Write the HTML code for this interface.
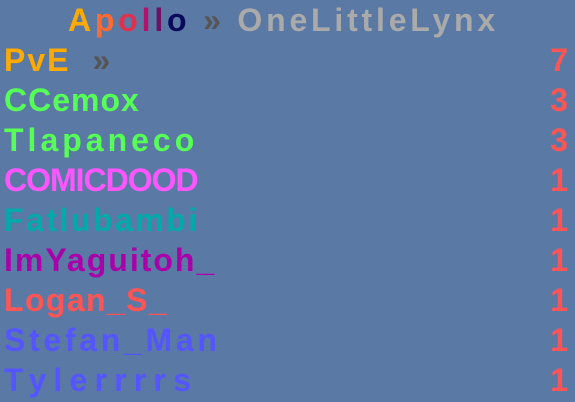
<!DOCTYPE html>
<html><head><style>
html,body{margin:0;padding:0}
body{width:575px;height:402px;background:#5a79a5;position:relative;overflow:hidden;font-family:"Liberation Sans",sans-serif;font-weight:bold;font-size:32px;}
.r{position:absolute;left:4px;height:40px;line-height:40px;letter-spacing:2px;white-space:nowrap}
.n{position:absolute;right:7px;color:#ff5555;height:40px;line-height:40px}
.t{position:absolute;left:68px;top:0;height:40px;line-height:40px;letter-spacing:3.8px;white-space:nowrap}
</style></head><body>
<div class="t"><span style="color:#ffaa00">A</span><span style="color:#ff6a33">p</span><span style="color:#e0304e">o</span><span style="color:#b3126a">l</span><span style="color:#701064">l</span><span style="color:#0a0a5c">o</span> <span style="color:#555">»</span> <span style="color:#aaa">OneLittleLynx</span></div>
<div class="r" style="top:40px;color:#ffaa00">PvE<span style="color:#555;margin-left:22px">»</span></div><div class="n" style="top:40px">7</div>
<div class="r" style="top:80px;color:#55ff55;letter-spacing:1px">CCemox</div><div class="n" style="top:80px">3</div>
<div class="r" style="top:120px;color:#55ff55;letter-spacing:4px">Tlapaneco</div><div class="n" style="top:120px">3</div>
<div class="r" style="top:160px;color:#ff55ff;letter-spacing:-1px">COMICDOOD</div><div class="n" style="top:160px">1</div>
<div class="r" style="top:200px;color:#00aaaa;letter-spacing:2.5px">Fatlubambi</div><div class="n" style="top:200px">1</div>
<div class="r" style="top:240px;color:#aa00aa">ImYaguitoh_</div><div class="n" style="top:240px">1</div>
<div class="r" style="top:280px;color:#ff5555;letter-spacing:1.4px">Logan_S_</div><div class="n" style="top:280px">1</div>
<div class="r" style="top:320px;color:#5555ff;letter-spacing:3.7px">Stefan_Man</div><div class="n" style="top:320px">1</div>
<div class="r" style="top:360px;color:#5555ff;letter-spacing:7.2px">Tylerrrrs</div><div class="n" style="top:360px">1</div>
</body></html>
